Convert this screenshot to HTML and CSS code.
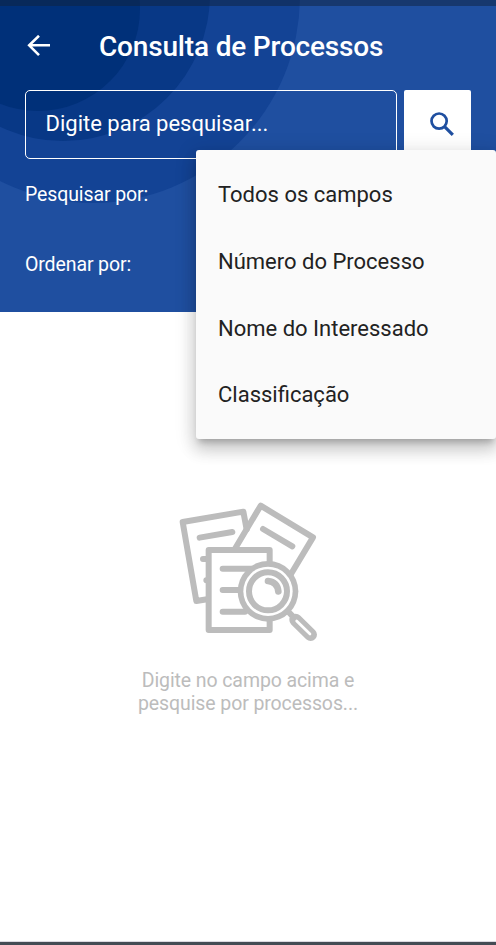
FILE: index.html
```html
<!DOCTYPE html>
<html lang="pt-BR">
<head>
<meta charset="utf-8">
<title>Consulta de Processos</title>
<link rel="stylesheet" href="styles.css">
</head>
<body>
<header class="header">
  <svg class="rings" viewBox="0 0 496 312" aria-hidden="true">
    <circle cx="93" cy="-4" r="207" fill="#134395"/>
    <circle cx="63" cy="-6" r="147" fill="#083886"/>
    <circle cx="38" cy="9" r="102" fill="#003079"/>
  </svg>
  <div class="status"></div>
  <div class="titlebar">
    <svg class="back" viewBox="0 0 24 22"><path d="M23 10.3H2.5M12 .8L2.2 10.3l9.8 9.8" fill="none" stroke="#fff" stroke-width="2.6"/></svg>
    <h1>Consulta de Processos</h1>
  </div>
  <div class="search">
    <div class="field">Digite para pesquisar...</div>
    <button class="go" aria-label="Pesquisar">
      <svg viewBox="0 0 24 24"><circle cx="9.1" cy="9.1" r="7.6" fill="none" stroke="#1f4fa0" stroke-width="2.7"/><path d="M14.8 14.8l8 8" stroke="#1f4fa0" stroke-width="3.2"/></svg>
    </button>
  </div>
  <div class="filter">Pesquisar por:</div>
  <div class="filter">Ordenar por:</div>
  <ul class="menu">
    <li>Todos os campos</li>
    <li>Número do Processo</li>
    <li>Nome do Interessado</li>
    <li>Classificação</li>
  </ul>
</header>
<main class="empty">
  <svg class="docs" viewBox="0 0 540 495" fill="none" stroke="#bcbcbc" stroke-width="18" stroke-linecap="round" stroke-linejoin="round">
    <path d="M260 118L250 65 68 96 109 333 146 327"/>
    <path d="M119 143L217 126M129 207h16M139 271h6"/>
    <path d="M225 176L302 47 459 142 393 252M309 117L397 169"/>
    <path d="M146 180H329V420H146Z" fill="#fff"/>
    <path d="M188 236H275M188 300H242M188 365H255"/>
    <circle cx="324" cy="304" r="91" fill="#bcbcbc" stroke="none"/>
    <circle cx="324" cy="304" r="74" fill="#fff" stroke="none"/>
    <circle cx="324" cy="304" r="57" fill="#fff"/>
    <path d="M324 273Q352 276 355 304" stroke-width="20"/>
    <path d="M383 363L399 380"/>
    <path d="M407 390L452 434" stroke-width="38"/>
    <path d="M410 393L450 432" stroke="#fff" stroke-width="8"/>
  </svg>
  <p>Digite no campo acima e<br>pesquise por processos...</p>
</main>
<footer class="navline"></footer>
</body>
</html>
```
FILE: styles.css
```css
* { box-sizing: border-box; }
body {
  margin: 0;
  height: 945px;
  display: flex;
  flex-direction: column;
  overflow: hidden;
  background: #fff;
  font-family: Roboto, sans-serif;
}
.header {
  position: relative;
  height: 312px;
  background: #1f4fa0;
  color: #fff;
}
.rings {
  position: absolute;
  inset: 0;
  width: 496px;
  height: 312px;
}
.status {
  position: relative;
  height: 6px;
  background: rgba(16, 34, 60, .5);
}
.titlebar {
  position: relative;
  display: flex;
  align-items: center;
  height: 84px;
  padding: 0 27px 4px;
}
.back { width: 24px; height: 22px; }
h1 {
  margin: 0 0 0 48px;
  font-size: 28px;
  letter-spacing: -.18px;
  line-height: 41px;
  font-weight: 500;
  white-space: nowrap;
}
.search {
  position: relative;
  display: flex;
  gap: 7px;
  height: 69px;
  padding: 0 25px;
}
.field {
  width: 372px;
  padding-left: 19.5px;
  border: 1px solid #fff;
  border-radius: 5px;
  font-size: 22px;
  line-height: 66px;
}
.go {
  width: 67px;
  padding: 0 0 2px 8px;
  display: flex;
  align-items: center;
  justify-content: center;
  border: 0;
  border-radius: 2px;
  background: #fff;
}
.go svg { width: 24px; height: 24px; }
.filter {
  position: relative;
  height: 70px;
  padding-left: 25px;
  font-size: 19.5px;
  letter-spacing: -.11px;
  line-height: 72px;
}
.menu {
  position: absolute;
  left: 196px;
  top: 150px;
  width: 300px;
  height: 289px;
  margin: 0;
  padding: 11px 22px;
  list-style: none;
  border-radius: 3px;
  background: #fafafa;
  color: #222;
  box-shadow: 0 6px 6px -3px rgba(0, 0, 0, .2), 0 11px 16px 1px rgba(0, 0, 0, .14), 0 4px 20px 3px rgba(0, 0, 0, .12);
  font-size: 22px;
}
.menu li { height: 66.8px; line-height: 67px; }
.empty {
  flex: 1;
  display: flex;
  flex-direction: column;
  align-items: center;
  padding-top: 178px;
}
.docs { width: 180px; height: 165px; margin-left: 4px; }
.empty p {
  margin: 15px 0 0;
  color: #bcbcbc;
  font-size: 19.5px;
  letter-spacing: -.1px;
  line-height: 22.5px;
  text-align: center;
}
.navline {
  height: 4px;
  border-top: 1px solid #dcd8e0;
  background: #444b54;
}
```
